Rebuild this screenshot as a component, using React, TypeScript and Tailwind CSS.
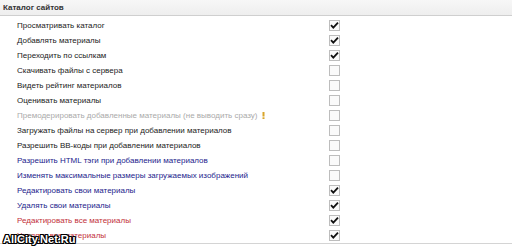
import React from "react";

type Row = { label: string; tone: "dark" | "muted" | "blue" | "red"; checked: boolean; hint?: boolean };

const rows: Row[] = [
  { label: "Просматривать каталог", tone: "dark", checked: true },
  { label: "Добавлять материалы", tone: "dark", checked: true },
  { label: "Переходить по ссылкам", tone: "dark", checked: true },
  { label: "Скачивать файлы с сервера", tone: "dark", checked: false },
  { label: "Видеть рейтинг материалов", tone: "dark", checked: false },
  { label: "Оценивать материалы", tone: "dark", checked: false },
  { label: "Премодерировать добавленные материалы (не выводить сразу)", tone: "muted", checked: false, hint: true },
  { label: "Загружать файлы на сервер при добавлении материалов", tone: "dark", checked: false },
  { label: "Разрешить BB-коды при добавлении материалов", tone: "dark", checked: false },
  { label: "Разрешить HTML тэги при добавлении материалов", tone: "blue", checked: false },
  { label: "Изменять максимальные размеры загружаемых изображений", tone: "blue", checked: false },
  { label: "Редактировать свои материалы", tone: "blue", checked: true },
  { label: "Удалять свои материалы", tone: "blue", checked: true },
  { label: "Редактировать все материалы", tone: "red", checked: true },
  { label: "Удалять все материалы", tone: "red", checked: true },
];

const toneClass = {
  dark: "text-[#222]",
  muted: "text-[#aaa]",
  blue: "text-[#23238c]",
  red: "text-[#c2303a]",
};

function Box({ checked }: { checked: boolean }) {
  return (
    <svg width="11" height="11" viewBox="0 0 11 11" aria-hidden>
      <rect x="0.5" y="0.5" width="10" height="10" fill="#fafafa" stroke="#bdbdbd" />
      {checked && <path d="M2 5.2 L4.3 7.6 L9 2.6" fill="none" stroke="#111" strokeWidth="1.8" />}
    </svg>
  );
}

export default function App() {
  return (
    <div className="relative w-[512px] h-[246px] overflow-hidden bg-white font-['Liberation_Sans',Arial,sans-serif]">
      {/* section header */}
      <div className="h-[16px] border-b border-[#cfcfcf] bg-gradient-to-b from-[#f7f7f7] to-[#eeeeee] pl-[3px] flex items-center">
        <span className="text-[8px] font-bold text-[#333]">Каталог сайтов</span>
      </div>

      <div className="pt-[2px] border-b border-[#d4d4d4]">
        {rows.map((r) => (
          <div key={r.label} className="h-[15px] flex items-center">
            <div className={`w-[329px] pl-[17px] text-[8px] flex items-center gap-[5px] ${toneClass[r.tone]}`}>
              <span>{r.label}</span>
              {r.hint && (
                <svg width="3" height="7" viewBox="0 0 3 7" aria-hidden>
                  <rect x="0.5" y="0" width="2" height="4.5" fill="#d9a52a" />
                  <rect x="0.5" y="5.3" width="2" height="1.7" fill="#d9a52a" />
                </svg>
              )}
            </div>
            <Box checked={r.checked} />
          </div>
        ))}
      </div>

      {/* watermark */}
      <div className="absolute left-[3px] bottom-[1px] text-[11px] font-bold leading-none text-white [text-shadow:1px_0_0_#000,-1px_0_0_#000,0_1px_0_#000,0_-1px_0_#000,1px_1px_0_#000,-1px_-1px_0_#000,1px_-1px_0_#000,-1px_1px_0_#000]">
        AllCity.Net.Ru
      </div>
    </div>
  );
}
